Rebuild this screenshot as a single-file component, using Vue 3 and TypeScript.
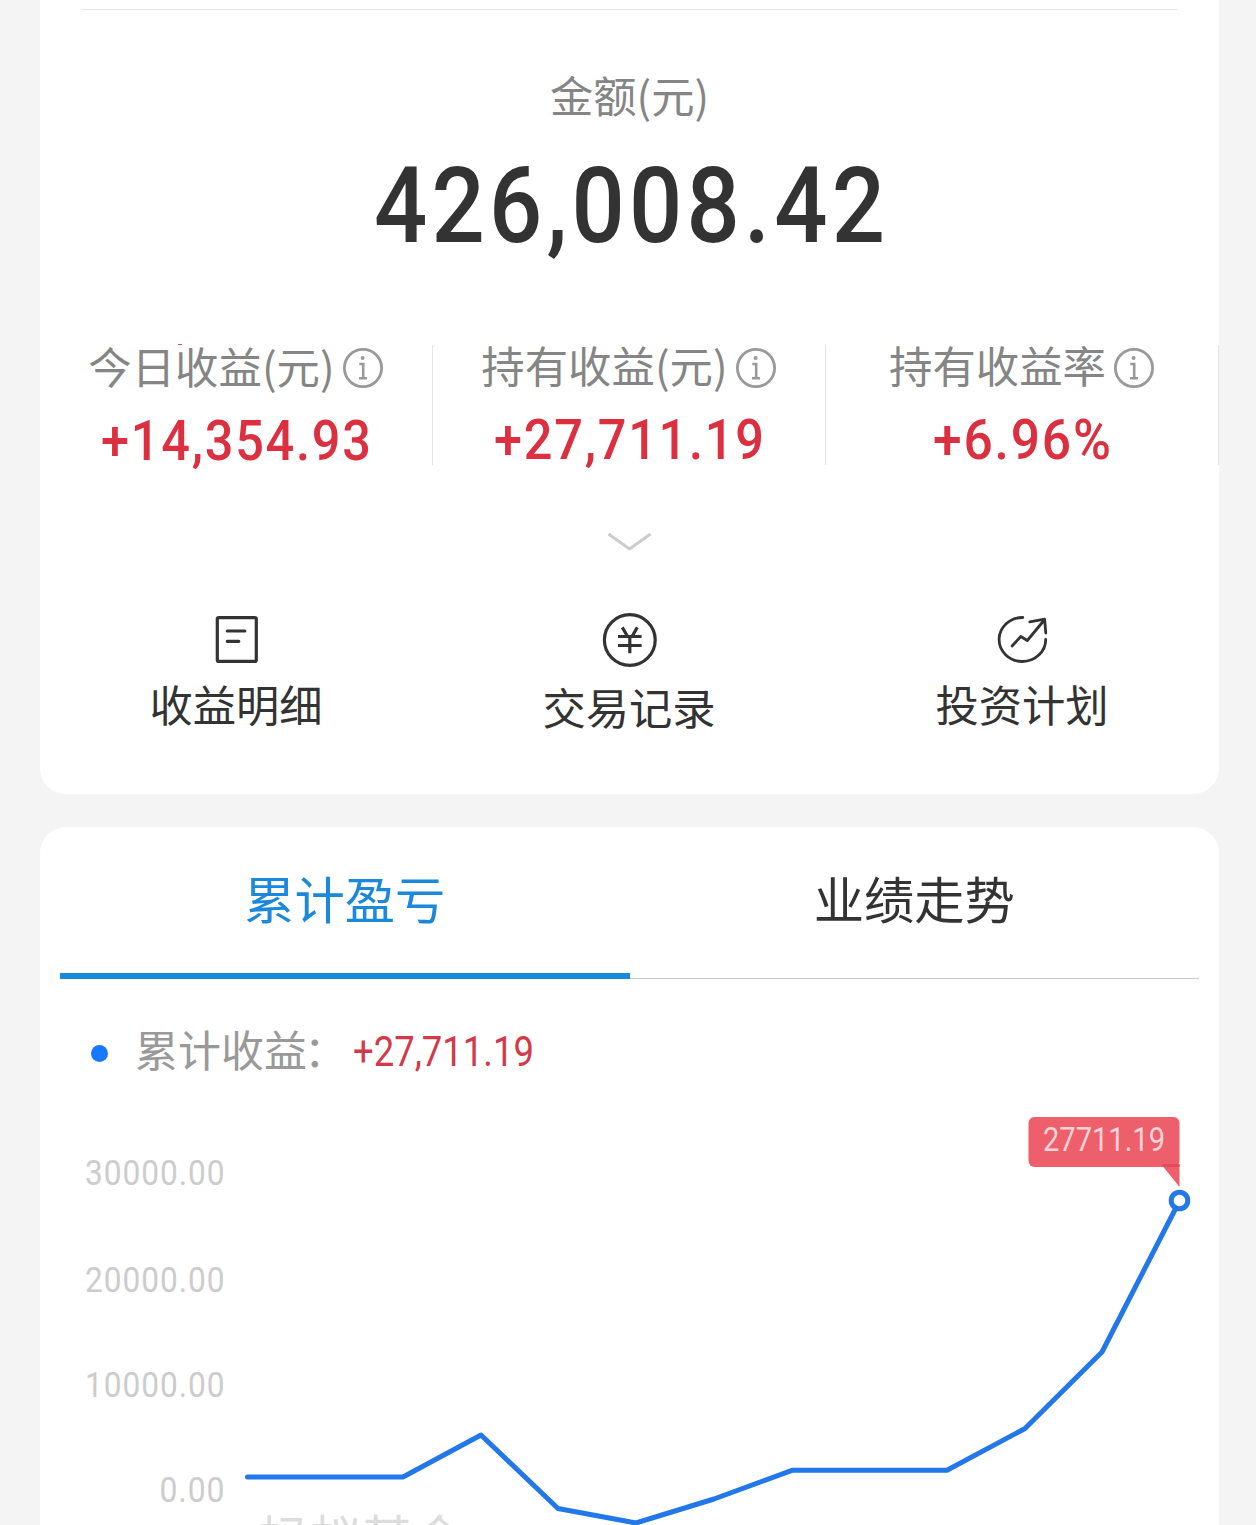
<script setup lang="ts">
import { h } from 'vue'

interface FigureProps {
  text: string
  width: number
  cap: number
  weight?: number
  tracking?: number
}

// Tabular figure fitted to a fixed width; the box height equals the digit height.
const Figure = (p: FigureProps) => {
  const size = p.cap / 0.711
  const tracking = (p.tracking ?? 0) * size
  return h(
    'svg',
    { width: p.width, height: p.cap, style: { display: 'block', overflow: 'visible' } },
    [
      h(
        'text',
        {
          x: 0,
          y: p.cap,
          fill: 'currentColor',
          'font-family': 'Roboto, sans-serif',
          'font-size': size,
          'font-weight': p.weight ?? 500,
          'letter-spacing': tracking,
          textLength: p.width + tracking * 0.9,
          lengthAdjust: 'spacingAndGlyphs',
        },
        p.text,
      ),
    ],
  )
}
Figure.props = ['text', 'width', 'cap', 'weight', 'tracking']

const stats = [
  { label: '今日收益(元)', value: '+14,354.93', width: 270, low: true },
  { label: '持有收益(元)', value: '+27,711.19', width: 270, low: false },
  { label: '持有收益率', value: '+6.96%', width: 178, low: false },
]

const actions = [
  { icon: 'doc', label: '收益明细' },
  { icon: 'yen', label: '交易记录' },
  { icon: 'trend', label: '投资计划' },
]

const axis = [
  { text: '30000.00', x: 85, y: 1185, w: 140.5 },
  { text: '20000.00', x: 85, y: 1291.5, w: 140.5 },
  { text: '10000.00', x: 85, y: 1397, w: 140.5 },
  { text: '0.00', x: 159.5, y: 1502, w: 66 },
]

const points: [number, number][] = [
  [247.5, 1477], [403, 1477], [481, 1435], [558, 1508.5], [636, 1523], [714, 1499],
  [792, 1470.3], [947, 1470.3], [1025, 1428.5], [1102, 1352], [1179.5, 1201],
]
const line = points.map((p) => p.join(',')).join(' ')
</script>

<template>
  <main class="page">
    <section class="card summary">
      <div class="rule"></div>
      <div class="amount-label">金额(元)</div>
      <div class="amount"><Figure text="426,008.42" :width="511" :cap="75" :tracking="0.045" /></div>

      <div class="stats">
        <div v-for="s in stats" :key="s.label" class="stat" :class="{ low: s.low }">
          <div class="stat-head">
            <span class="stat-label">{{ s.label }}</span>
            <svg class="info" width="40" height="40" viewBox="0 0 40 40" fill="none" stroke="#999">
              <circle cx="20" cy="20" r="18.6" stroke-width="2.8" />
              <circle cx="19.6" cy="10" r="2" fill="#999" stroke="none" />
              <path d="M16.3 16H20.2V30M16 30.3H24" stroke-width="2.6" />
            </svg>
          </div>
          <div class="stat-value"><Figure :text="s.value" :width="s.width" :cap="39.5" :tracking="0.035" /></div>
        </div>
        <i class="speck"></i>
      </div>

      <svg class="chevron" width="44" height="20" viewBox="0 0 44 20" fill="none">
        <path d="M.5 2 21.5 17 42.5 2" stroke="#ccc" stroke-width="3" />
      </svg>

      <div class="actions">
        <div v-for="a in actions" :key="a.label" class="action" :class="a.icon">
          <svg width="60" height="60" viewBox="0.7 0 60 60" fill="none" stroke="#333" stroke-width="3.2">
            <g v-if="a.icon === 'doc'" stroke-linecap="round">
              <rect x="11" y="7.6" width="39" height="43.8" rx="1.5" />
              <path d="M21 21H38.5M21 31.3H32.5" />
            </g>
            <g v-else-if="a.icon === 'yen'">
              <circle cx="30.5" cy="30" r="25.4" />
              <path d="M23 17.4 28 26M38 17.4 33 26M18.7 26.5H42.3M18.7 35.5H42.3M30.5 26V43.3" />
            </g>
            <g v-else stroke-width="2.8" stroke-linecap="round" stroke-linejoin="round">
              <path d="M30.5 7.5A23.3 22 0 1 0 53.4 29.5" />
              <path d="M19.8 36 28.5 26.5 35 30.5 52 10M37.5 11.8 52.3 9.2 53.5 23" />
            </g>
          </svg>
          <span>{{ a.label }}</span>
        </div>
      </div>
    </section>

    <section class="card trend-card">
      <nav class="tabs">
        <div class="tab active">累计盈亏</div>
        <div class="tab">业绩走势</div>
      </nav>
      <div class="legend">
        <i class="dot"></i>
        <span class="legend-label">累计收益<span class="colon">：</span></span>
        <span class="legend-value"><Figure text="+27,711.19" :width="181" :cap="30.5" :weight="400" /></span>
      </div>
      <svg class="chart" width="1179" height="425" viewBox="40 1100 1179 425">
        <g class="axis">
          <text v-for="a in axis" :key="a.text" :x="a.x" :y="a.y" :textLength="a.w" lengthAdjust="spacingAndGlyphs">{{ a.text }}</text>
        </g>
        <text class="watermark" x="257" y="1558.5">蚂蚁基金</text>
        <polyline :points="line" fill="none" stroke="#2278e8" stroke-width="5" stroke-linecap="round" stroke-linejoin="round" />
        <circle cx="1179.5" cy="1200.5" r="8.3" fill="#fff" stroke="#2278e8" stroke-width="5" />
        <rect x="1028.5" y="1117" width="151" height="50" rx="6" fill="#ed5f6b" />
        <path d="M1161 1164H1179.5V1187Z" fill="#ed5f6b" />
        <path d="M1161 1164H1179.5V1167H1163.4Z" fill="#e5495a" />
        <text class="tip" x="1043" y="1151" textLength="122" lengthAdjust="spacingAndGlyphs">27711.19</text>
      </svg>
    </section>
  </main>
</template>

<style>
body {
  background: #f4f4f4;
}
</style>

<style scoped>
.page {
  box-sizing: border-box;
  width: 1256px;
  height: 1525px;
  overflow: hidden;
  padding: 0 37px 0 40px;
  background: #f4f4f4;
  font-family: 'Noto Sans CJK SC', sans-serif;
  color: #333;
}
.card {
  background: #fff;
  overflow: hidden;
}
.summary {
  height: 794px;
  border-radius: 0 0 26px 26px;
}
.rule {
  height: 1px;
  margin: 9px 41px 0;
  background: #e6e6e6;
}
.amount-label {
  margin-top: 52px;
  height: 64px;
  line-height: 64px;
  text-align: center;
  font-size: 43.3px;
  color: #858585;
}
.amount {
  margin-top: 41px;
  display: flex;
  justify-content: center;
}
.stats {
  position: relative;
  display: flex;
  margin-top: 103px;
  height: 120px;
}
.stat {
  flex: 1;
  box-sizing: border-box;
  border-right: 1px solid #e5e5e5;
}
.stat-head {
  display: flex;
  justify-content: center;
  height: 44px;
  gap: 8px;
  padding-right: 1px;
}
.stat-label {
  margin-top: -3px;
  font-size: 43.4px;
  line-height: 44px;
  color: #858585;
  white-space: nowrap;
}
.low .stat-label {
  margin-top: -2px;
}
.info {
  margin-top: 3px;
  flex: none;
}
.stat-value {
  display: flex;
  justify-content: center;
  margin-top: 29.5px;
  color: #dc3040;
}
.low .stat-value {
  margin-top: 30.5px;
}
.speck {
  position: absolute;
  left: 138px;
  top: -1px;
  width: 4px;
  height: 1px;
  background: #d0505c;
}
.chevron {
  display: block;
  margin: 67px auto 0;
}
.actions {
  display: flex;
  margin-top: 58px;
}
.action {
  flex: 1;
  display: flex;
  flex-direction: column;
  align-items: center;
  font-size: 43.3px;
  line-height: 60px;
}
.action span {
  margin: 3px 1px 0 0;
}
.action.yen span {
  margin-top: 6px;
}
.trend-card {
  margin-top: 33px;
  height: 698px;
  border-radius: 26px 26px 0 0;
}
.tabs {
  display: flex;
  margin: 0 20px;
  height: 152px;
}
.tab {
  flex: 1;
  box-sizing: border-box;
  border-bottom: 1px solid #ccc;
  text-align: center;
  font-size: 50.3px;
  line-height: 141px;
}
.tab.active {
  color: #1c88db;
  border-bottom: 6px solid #1c88db;
}
.legend {
  display: flex;
  align-items: center;
  height: 121px;
  padding: 0 0 0 51px;
}
.dot {
  width: 17px;
  height: 17px;
  border-radius: 50%;
  background: #1677ff;
  margin-top: 27px;
}
.legend-label {
  margin: 16px 0 0 27px;
  width: 218px;
  font-size: 43px;
  line-height: 60px;
  color: #999;
  white-space: nowrap;
}
.colon {
  margin-left: -3px;
}
.legend-value {
  margin-top: 21px;
  color: #d33a49;
}
.chart {
  display: block;
}
.axis text {
  font: 400 35px Roboto, sans-serif;
  letter-spacing: 0.03em;
  fill: #ccc;
}
.tip {
  font: 400 33px Roboto, sans-serif;
  fill: #fcd3d7;
}
.watermark {
  font-size: 52px;
  fill: #ddd;
}
</style>
